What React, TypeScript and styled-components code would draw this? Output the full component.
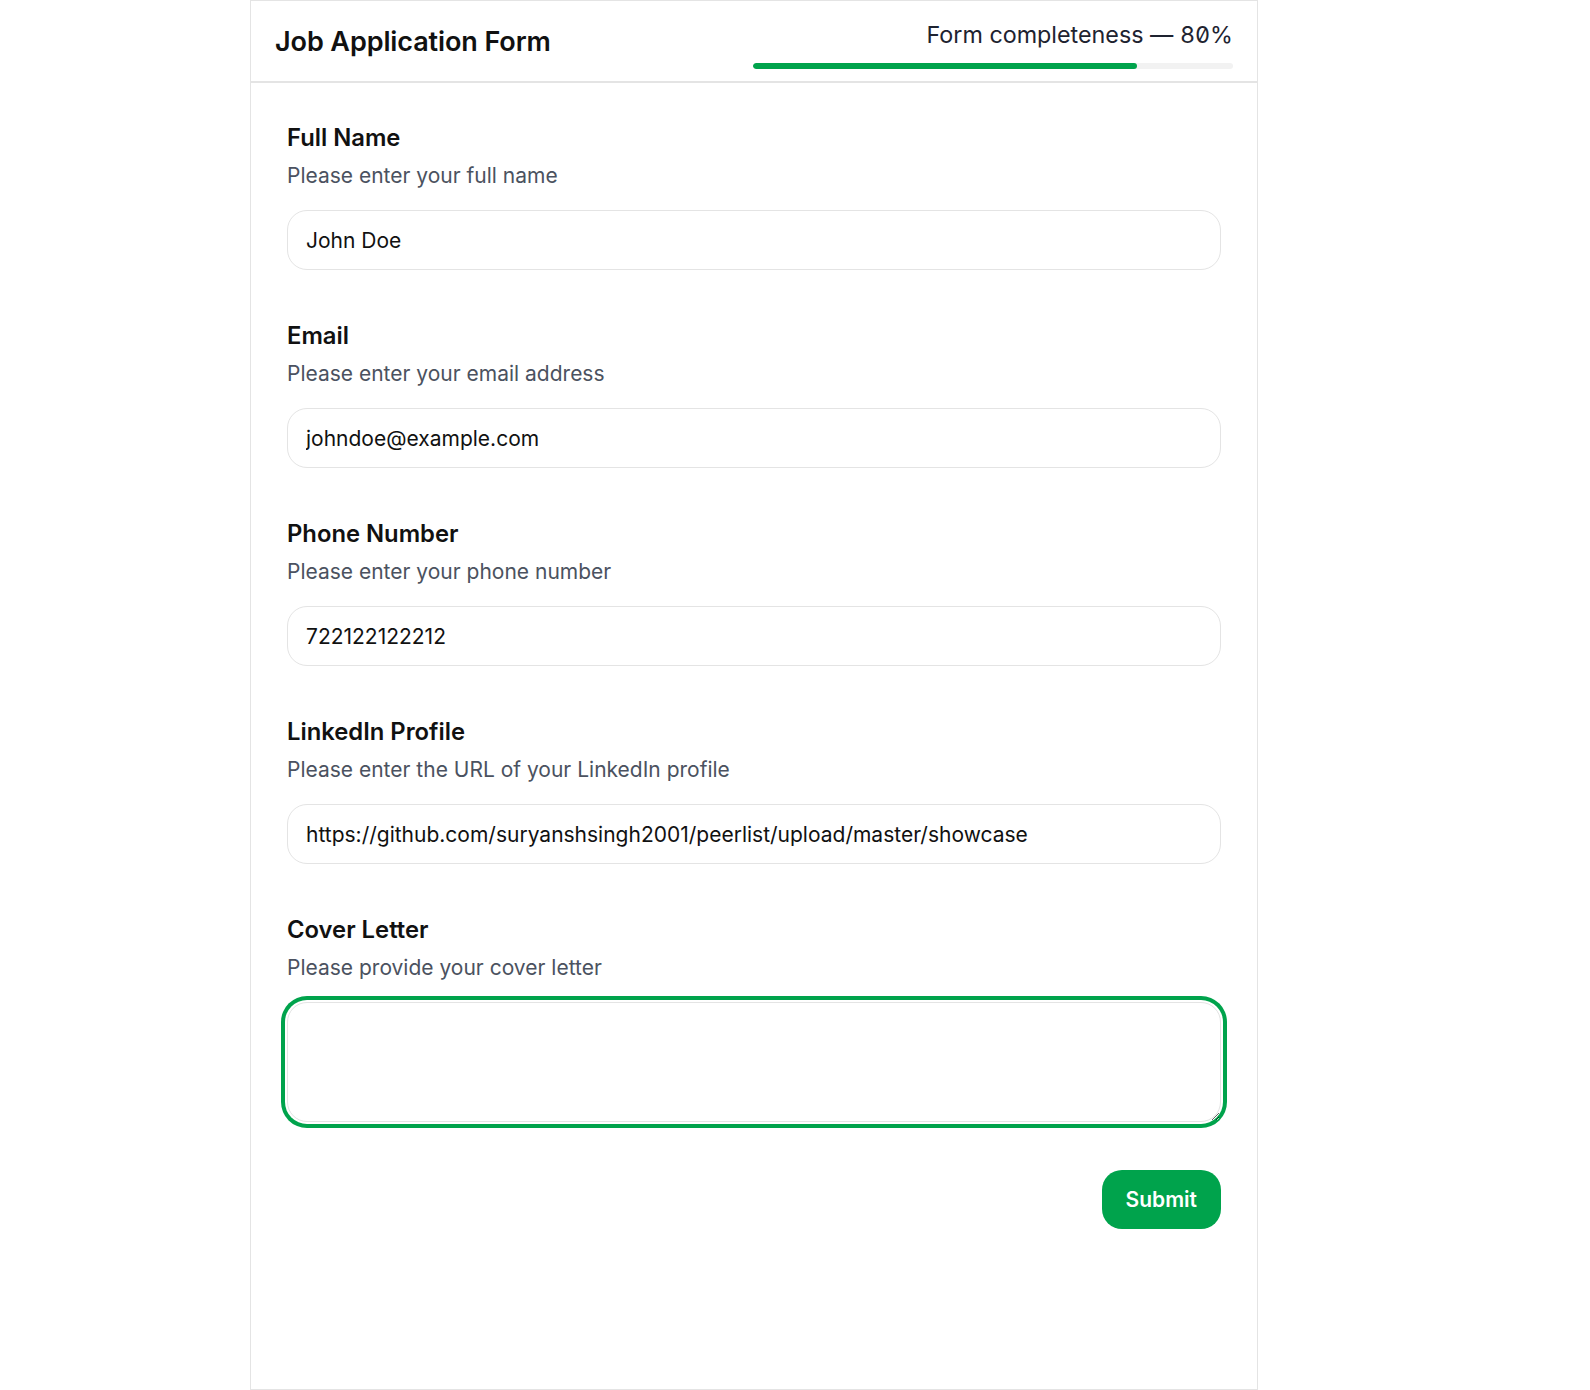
import React, { useState } from 'react';
import styled, { createGlobalStyle } from 'styled-components';

const GlobalStyle = createGlobalStyle`
  * {
    box-sizing: border-box;
  }

  body {
    margin: 0;
    background: #ffffff;
    font-family: Inter, 'Noto Sans', 'Liberation Sans', sans-serif;
    color: #111111;
  }
`;

const Page = styled.div`
  min-height: 100vh;
  padding-left: 250px;
`;

const Card = styled.div`
  width: 1008px;
  min-height: 100vh;
  border: 1px solid #e4e4e4;
  background: #ffffff;
`;

const Header = styled.header`
  height: 82px;
  padding: 0 24px;
  display: flex;
  align-items: center;
  justify-content: space-between;
  border-bottom: 2px solid #e4e4e4;
`;

const Title = styled.h1`
  margin: 0;
  font-size: 27px;
  font-weight: 600;
  letter-spacing: -0.1px;
  color: #111111;
`;

const Progress = styled.div`
  width: 480px;
  display: flex;
  flex-direction: column;
  align-items: flex-end;
  gap: 14px;
  padding-top: 8px;
`;

const ProgressLabel = styled.div`
  font-size: 23.3px;
  line-height: 28px;
  color: #1e2330;
`;

const Percent = styled.span`
  font-feature-settings: 'tnum', 'zero';
  font-variant-numeric: tabular-nums slashed-zero;
`;

const Track = styled.div`
  width: 100%;
  height: 6px;
  border-radius: 3px;
  background: #f2f2f2;
  overflow: hidden;
`;

const Fill = styled.div`
  height: 100%;
  border-radius: 3px;
  background: #00a34c;
`;

const Body = styled.form`
  padding: 41px 36px 40px 36px;
  display: flex;
  flex-direction: column;
  gap: 52px;
`;

const Field = styled.div`
  display: flex;
  flex-direction: column;
`;

const Label = styled.label`
  font-size: 23.8px;
  line-height: 28px;
  font-weight: 600;
  color: #111111;
`;

const Hint = styled.p`
  margin: 10px 0 20px;
  font-size: 21px;
  line-height: 28px;
  color: #4b5260;
`;

const Input = styled.input`
  height: 60px;
  width: 100%;
  padding: 0 18px;
  border: 1px solid #e4e4e4;
  border-radius: 20px;
  font-family: inherit;
  font-size: 21px;
  color: #111111;
  background: #ffffff;
  outline: none;
`;

const TextArea = styled.textarea<{ $active: boolean }>`
  height: 120px;
  width: 100%;
  padding: 14px 18px;
  border: 1px solid #e4e4e4;
  border-radius: 20px;
  font-family: inherit;
  font-size: 21px;
  color: #111111;
  caret-color: #111111;
  background: #ffffff;
  outline: none;
  box-shadow: ${p => (p.$active ? '0 0 0 2px #ffffff, 0 0 0 6px #00a34c' : 'none')};
`;

const Actions = styled.div`
  display: flex;
  justify-content: flex-end;
  margin-top: -4px;
`;

const SubmitButton = styled.button`
  height: 59px;
  padding: 0 24px;
  border: none;
  border-radius: 20px;
  background: #00a34c;
  color: #ffffff;
  font-family: inherit;
  font-size: 21px;
  font-weight: 600;
  cursor: pointer;
`;

const fields = [
  { id: 'name', label: 'Full Name', hint: 'Please enter your full name', value: 'John Doe' },
  { id: 'email', label: 'Email', hint: 'Please enter your email address', value: 'johndoe@example.com' },
  { id: 'phone', label: 'Phone Number', hint: 'Please enter your phone number', value: '722122122212' },
  {
    id: 'linkedin',
    label: 'LinkedIn Profile',
    hint: 'Please enter the URL of your LinkedIn profile',
    value: 'https://github.com/suryanshsingh2001/peerlist/upload/master/showcase',
  },
];

export default function App() {
  const [values, setValues] = useState<Record<string, string>>(
    Object.fromEntries(fields.map(f => [f.id, f.value]))
  );
  const [cover, setCover] = useState('');
  const completeness = 80;

  return (
    <Page>
      <GlobalStyle />
      <Card>
        <Header>
          <Title>Job Application Form</Title>
          <Progress>
            <ProgressLabel>
              Form completeness — <Percent>{completeness}%</Percent>
            </ProgressLabel>
            <Track>
              <Fill style={{ width: `${completeness}%` }} />
            </Track>
          </Progress>
        </Header>
        <Body onSubmit={e => e.preventDefault()}>
          {fields.map(f => (
            <Field key={f.id}>
              <Label htmlFor={f.id}>{f.label}</Label>
              <Hint>{f.hint}</Hint>
              <Input
                id={f.id}
                value={values[f.id]}
                onChange={e => setValues({ ...values, [f.id]: e.target.value })}
              />
            </Field>
          ))}
          <Field>
            <Label htmlFor="cover">Cover Letter</Label>
            <Hint>Please provide your cover letter</Hint>
            <TextArea
              id="cover"
              $active
              autoFocus
              value={cover}
              onChange={e => setCover(e.target.value)}
            />
          </Field>
          <Actions>
            <SubmitButton type="submit">Submit</SubmitButton>
          </Actions>
        </Body>
      </Card>
    </Page>
  );
}
